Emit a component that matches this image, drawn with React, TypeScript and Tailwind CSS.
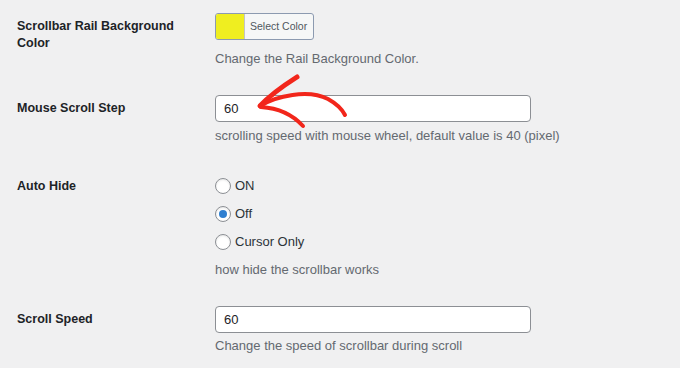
import { useState } from "react"

const font = { fontFamily: '"Liberation Sans", Arial, sans-serif' }

function Radio({ label, checked, onClick }: { label: string; checked: boolean; onClick: () => void }) {
    return (
        <label className="flex items-center h-[28px] cursor-pointer" onClick={onClick}>
            <span className="w-[16px] h-[16px] rounded-full border border-[#8c8f94] bg-white flex items-center justify-center shadow-[inset_0_1px_2px_rgba(0,0,0,0.1)]">
                {checked && <span className="w-[8px] h-[8px] rounded-full bg-[#2f7fd0]" />}
            </span>
            <span className="ml-[4px] text-[13px] text-[#2c3338]">{label}</span>
        </label>
    )
}

export default function App() {
    const [hide, setHide] = useState("off")

    return (
        <div className="relative w-[680px] h-[368px] bg-[#f0f0f1] overflow-hidden text-[#1d2327]" style={font}>
            {/* Rail background colour */}
            <div className="flex">
                <div className="w-[198px] ml-[17px] pt-[18px] pr-[20px] font-bold text-[12.5px] leading-[17px]">
                    Scrollbar Rail Background Color
                </div>
                <div className="pt-[13px]">
                    <button className="flex h-[27px] w-[99px] rounded-[3px] border border-[#8c9ab0] overflow-hidden bg-[#f6f7f7]">
                        <span className="w-[28px] h-full bg-[#efee20]" />
                        <span className="flex-1 h-full border-l border-[#c3c4c7] text-[10.5px] text-[#50575e] leading-[25px] pl-[5px] text-left">Select Color</span>
                    </button>
                    <p className="mt-[10px] text-[13px] leading-[18px] text-[#646970]">Change the Rail Background Color.</p>
                </div>
            </div>

            {/* Mouse scroll step */}
            <div className="flex mt-[27px]">
                <div className="w-[198px] ml-[17px] h-[27px] flex items-center font-bold text-[12.5px]">Mouse Scroll Step</div>
                <div>
                    <input defaultValue="60" className="block w-[316px] h-[27px] rounded-[4px] border border-[#8c8f94] bg-white px-[8px] text-[13px] text-[#1d2327] outline-none" />
                    <p className="mt-[5px] text-[13px] leading-[18px] text-[#646970] whitespace-nowrap">scrolling speed with mouse wheel, default value is 40 (pixel)</p>
                </div>
            </div>

            {/* Auto hide */}
            <div className="flex mt-[27px]">
                <div className="w-[198px] ml-[17px] h-[28px] flex items-center font-bold text-[12.5px]">Auto Hide</div>
                <div>
                    <Radio label="ON" checked={hide === "on"} onClick={() => setHide("on")} />
                    <Radio label="Off" checked={hide === "off"} onClick={() => setHide("off")} />
                    <Radio label="Cursor Only" checked={hide === "cursor"} onClick={() => setHide("cursor")} />
                    <p className="mt-[5px] text-[13px] leading-[18px] text-[#646970]">how hide the scrollbar works</p>
                </div>
            </div>

            {/* Scroll speed */}
            <div className="flex mt-[27px]">
                <div className="w-[198px] ml-[17px] h-[27px] flex items-center font-bold text-[12.5px]">Scroll Speed</div>
                <div>
                    <input defaultValue="60" className="block w-[316px] h-[27px] rounded-[4px] border border-[#8c8f94] bg-white px-[8px] text-[13px] text-[#1d2327] outline-none" />
                    <p className="mt-[4px] text-[13px] leading-[18px] text-[#646970]">Change the speed of scrollbar during scroll</p>
                </div>
            </div>

            {/* hand drawn arrow */}
            <svg className="absolute inset-0 pointer-events-none" width="680" height="368" viewBox="0 0 680 368" fill="none">
                <g stroke="#f2261b" strokeLinecap="round" strokeLinejoin="round">
                    <path d="M297 77 C286 84 270 95 260 106" strokeWidth="5" />
                    <path d="M260 106 C276 96 308 89 328 99 C337 104 342 109 345 115" strokeWidth="4" />
                    <path d="M261 107 C277 108 292 114 303 126" strokeWidth="4" />
                </g>
            </svg>
        </div>
    )
}
